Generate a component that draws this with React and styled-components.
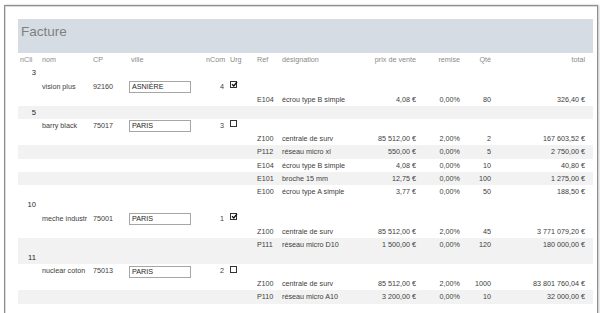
import React from "react";
import styled, { createGlobalStyle } from "styled-components";

const GlobalStyle = createGlobalStyle`
  html, body {
    margin: 0;
    padding: 0;
    background: #ffffff;
    overflow: hidden;
  }
  body {
    font-family: "Liberation Sans", Arial, sans-serif;
  }
`;

const Paper = styled.div`
  margin: 5px 2px 0 4px;
  min-height: 330px;
  border: 1px solid #8f8f8f;
  border-bottom: none;
  box-shadow: inset 1px 1px 0 #d9d9d9, 1px 0 2px rgba(0, 0, 0, 0.25);
  padding: 13px 4px 0 13px;
  background: #fff;
`;

const Banner = styled.div`
  height: 34px;
  background: #d6dce4;
  box-sizing: border-box;
  padding: 5px 0 0 3px;
  font-size: 13.5px;
  line-height: 16px;
  color: #7f7f7f;
`;

const cols = "24px 51px 36px 71px 25px 32px 25px 88px 46px 44px 31px 94px 8px";

const Row = styled.div`
  display: grid;
  grid-template-columns: ${cols};
  height: 13.2px;
  align-items: center;
  font-size: 7.2px;
  line-height: 9px;
  color: ${(p) => (p.head ? "#8a8a8a" : "#404040")};
  background: ${(p) => (p.shade ? "#f2f2f2" : "transparent")};
  white-space: nowrap;
`;

const Cell = styled.div`
  grid-column: ${(p) => p.col};
  text-align: ${(p) => (p.right ? "right" : "left")};
  padding-left: ${(p) => p.pl || 0}px;
  padding-right: ${(p) => p.pr || 0}px;
  overflow: visible;
`;

const ClientNo = styled(Cell)`
  color: #262626;
  font-size: 7.6px;
`;

const TextBox = styled.div`
  grid-column: 4;
  width: 62px;
  height: 12px;
  box-sizing: border-box;
  border: 1px solid #a6a6a6;
  padding-left: 2px;
  line-height: 10px;
  color: #262626;
  align-self: start;
  margin-top: 1.5px;
`;

const Check = styled.div`
  grid-column: 6;
  margin-left: 5px;
  width: 7px;
  height: 7px;
  box-sizing: border-box;
  border: 1px solid #333;
  align-self: start;
  margin-top: 1.5px;
  position: relative;
  background: #fff;
  svg {
    position: absolute;
    left: 0;
    top: -1px;
  }
`;

const detailRow = (d) => (
  <Row key={d.ref + d.qte + d.total} shade={d.shade}>
    <Cell col={7}>{d.ref}</Cell>
    <Cell col={8}>{d.des}</Cell>
    <Cell col={9} right>{d.prix}</Cell>
    <Cell col={10} right>{d.remise}</Cell>
    <Cell col={11} right>{d.qte}</Cell>
    <Cell col={12} right>{d.total}</Cell>
  </Row>
);

const data = [
  {
    ncli: "3", shade: false, nom: "vision plus", cp: "92160", ville: "ASNIÈRE", ncom: "4", urg: true,
    lines: [
      { ref: "E104", des: "écrou type B simple", prix: "4,08 €", remise: "0,00%", qte: "80", total: "326,40 €", shade: false },
    ],
  },
  {
    ncli: "5", shade: true, nom: "barry black", cp: "75017", ville: "PARIS", ncom: "3", urg: false,
    lines: [
      { ref: "Z100", des: "centrale de surv", prix: "85 512,00 €", remise: "2,00%", qte: "2", total: "167 603,52 €", shade: false },
      { ref: "P112", des: "réseau micro xl", prix: "550,00 €", remise: "0,00%", qte: "5", total: "2 750,00 €", shade: true },
      { ref: "E104", des: "écrou type B simple", prix: "4,08 €", remise: "0,00%", qte: "10", total: "40,80 €", shade: false },
      { ref: "E101", des: "broche 15 mm", prix: "12,75 €", remise: "0,00%", qte: "100", total: "1 275,00 €", shade: true },
      { ref: "E100", des: "écrou type A simple", prix: "3,77 €", remise: "0,00%", qte: "50", total: "188,50 €", shade: false },
    ],
  },
  {
    ncli: "10", shade: false, nom: "meche industr", cp: "75001", ville: "PARIS", ncom: "1", urg: true,
    lines: [
      { ref: "Z100", des: "centrale de surv", prix: "85 512,00 €", remise: "2,00%", qte: "45", total: "3 771 079,20 €", shade: false },
      { ref: "P111", des: "réseau micro D10", prix: "1 500,00 €", remise: "0,00%", qte: "120", total: "180 000,00 €", shade: true },
    ],
  },
  {
    ncli: "11", shade: true, nom: "nuclear coton", cp: "75013", ville: "PARIS", ncom: "2", urg: false,
    lines: [
      { ref: "Z100", des: "centrale de surv", prix: "85 512,00 €", remise: "2,00%", qte: "1000", total: "83 801 760,04 €", shade: false },
      { ref: "P110", des: "réseau micro A10", prix: "3 200,00 €", remise: "0,00%", qte: "10", total: "32 000,00 €", shade: true },
    ],
  },
];

export default function App() {
  return (
    <>
      <GlobalStyle />
      <Paper>
        <Banner>Facture</Banner>
        <Row head>
          <Cell col={1} pl={2}>nCli</Cell>
          <Cell col={2}>nom</Cell>
          <Cell col={3}>CP</Cell>
          <Cell col={4} pl={2}>ville</Cell>
          <Cell col={5} pl={6}>nCom</Cell>
          <Cell col={6} pl={5}>Urg</Cell>
          <Cell col={7}>Ref</Cell>
          <Cell col={8}>désignation</Cell>
          <Cell col={9} right>prix de vente</Cell>
          <Cell col={10} right>remise</Cell>
          <Cell col={11} right>Qté</Cell>
          <Cell col={12} right>total</Cell>
        </Row>
        {data.map((c) => (
          <React.Fragment key={c.ncli}>
            <Row shade={c.shade}>
              <ClientNo col={1} right pr={6}>{c.ncli}</ClientNo>
            </Row>
            <Row>
              <Cell col={2}>{c.nom}</Cell>
              <Cell col={3}>{c.cp}</Cell>
              <TextBox>{c.ville}</TextBox>
              <Cell col={5} right pr={1}>{c.ncom}</Cell>
              <Check>
                {c.urg && (
                  <svg width="7" height="7" viewBox="0 0 7 7">
                    <path d="M1 3.2 L2.8 5 L6 1" fill="none" stroke="#111" strokeWidth="1.3" />
                  </svg>
                )}
              </Check>
            </Row>
            {c.lines.map(detailRow)}
          </React.Fragment>
        ))}
      </Paper>
    </>
  );
}
